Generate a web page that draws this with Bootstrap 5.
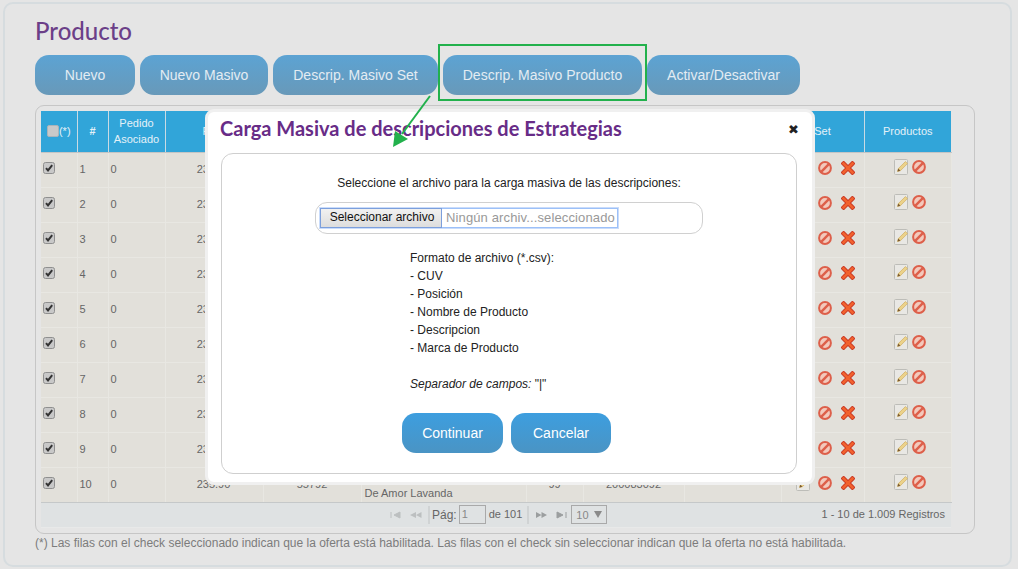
<!DOCTYPE html>
<html lang="es">
<head>
  <meta charset="UTF-8" />
  <meta name="viewport" content="width=device-width, initial-scale=1.0" />
  <title>Producto</title>
  <link href="https://cdn.jsdelivr.net/npm/bootstrap@5.3.3/dist/css/bootstrap.min.css" rel="stylesheet">
  <style>
    body {
      background-color: #e5e5e5;
      font-family: "Liberation Sans", Arial, sans-serif;
      font-size: 12px;
      color: #666;
      height: 569px;
      overflow: hidden;
      position: relative;
    }
    .shell {
      margin: 2px 6px 0 3px;
      height: 565px;
      border: 2px solid #d6dcdf;
      border-radius: 10px;
      padding: 13px 36px 0 30px;
    }
    .page-title {
      font-family: Lato, sans-serif;
      font-size: 24px;
      font-weight: 500;
      line-height: 28px;
      color: #6b3f88;
      margin: 0 0 10px;
    }
    .top-bar { gap: 5px; }
    .btn-top {
      height: 40px;
      padding: 0;
      border: 0;
      border-radius: 14px;
      background: linear-gradient(#5ca3d3, #6899b9);
      color: #e3ecf3;
      font-size: 14px;
    }
    .w-a { width: 100px; }
    .w-b { width: 128px; }
    .w-c { width: 165px; }
    .w-d { width: 199px; }
    .w-e { width: 153px; }
    .frame {
      margin-top: 10px;
      width: 940px;
      height: 429px;
      border: 1px solid #c6c6c6;
      border-radius: 9px;
      padding: 5px;
    }
    .grid-tbl {
      table-layout: fixed;
      width: 910px;
      border-collapse: collapse;
    }
    .grid-tbl th {
      height: 41px;
      padding: 0;
      background: #31a5d9;
      color: #e4f1f8;
      font-size: 11px;
      line-height: 16px;
      font-weight: 400;
      text-align: center;
      border-right: 1px solid #c9dbe4;
      border-bottom: 1px solid #c5c5c5;
    }
    .grid-tbl th:last-child { border-right: 0; }
    .grid-tbl th.price-head { text-align: left; padding-left: 37px; }
    .grid-tbl td {
      height: 35px;
      padding: 0 0 0 2px;
      background: #e2e0da;
      border-right: 1px solid #e8e7e2;
      border-bottom: 1px solid #e8e7e2;
      font-size: 11px;
      line-height: 17px;
      color: #666;
      vertical-align: middle;
    }
    .grid-tbl tr:last-child td { border-bottom: 1px solid #c5c8c9; }
    .grid-tbl td.mid { text-align: center; padding: 0; }
    .grid-tbl td.price { padding-right: 1px; }
    .grid-tbl td.chk { padding: 0 0 5px 2px; }
    .grid-tbl td.desc-cell { padding-left: 3px; }
    .grid-tbl td.set-cell { padding-left: 14px; }
    .grid-tbl td.prod-cell { text-align: center; padding: 0 0 0 5px; }
    .set-icons { gap: 7px; padding-top: 1px; }
    .set-icons .ico + .ico + .ico { margin-left: 2px; }
    .prod-icons { gap: 3px; }
    .c1 { width: 36px; } .c2 { width: 31px; } .c3 { width: 57px; }
    .c4 { width: 98px; } .c5 { width: 98px; } .c6 { width: 165px; }
    .c7 { width: 57px; } .c8 { width: 101px; } .c9 { width: 97px; }
    .c10 { width: 83px; } .c11 { width: 87px; }
    .head-box {
      width: 12px;
      height: 12px;
      background: #c9c9c9;
      border: 1px solid #aab4ba;
      border-radius: 2px;
      display: inline-block;
      vertical-align: -2px;
    }
    .ico { display: inline-block; vertical-align: middle; }
    .pager {
      width: 910px;
      height: 25px;
      background: #dfe2e3;
      border-bottom: 1px solid #e8e9e9;
      color: #666;
      font-size: 11px;
      padding-right: 6px;
    }
    .pg-left { margin-left: 349px; }
    .pg-sep { width: 2px; height: 18px; background: #d0d3d4; }
    .pg-lbl { font-size: 12px; }
    .pg-num {
      width: 27px;
      height: 19px;
      border: 1px solid #a9a9a9;
      padding-left: 2px;
      line-height: 17px;
      color: #888;
      font-size: 11px;
    }
    .pg-size {
      width: 36px;
      height: 19px;
      border: 1px solid #a9a9a9;
      padding-left: 4px;
      line-height: 18px;
      color: #888;
      font-size: 11px;
    }
    .ml2 { margin-left: 2px; }
    .ml3 { margin-left: 3px; }
    .ml4 { margin-left: 4px; }
    .ml5 { margin-left: 5px; }
    .ml6 { margin-left: 6px; }
    .ml8 { margin-left: 8px; }
    .foot-note { margin: 2px 0 0; color: #7c7c7c; font-size: 12px; line-height: 14px; }

    /* lo que va encima de la tabla */
    .mark-box {
      position: absolute;
      left: 438px;
      top: 44px;
      width: 209px;
      height: 57px;
      border: 2px solid #22b14c;
    }
    .load-modal {
      position: absolute;
      left: 205px;
      top: 109px;
      width: 610px;
      height: 376px;
      background: #fff;
      border: 3px solid #f0f0f0;
      border-radius: 9px;
      padding: 4px 15px 11px 12px;
      color: #222;
    }
    .load-title {
      font-family: Lato, sans-serif;
      font-size: 20px;
      font-weight: 700;
      line-height: 24px;
      color: #682c87;
      margin: 0;
    }
    .close-x {
      font-family: "DejaVu Sans", sans-serif;
      font-size: 13px;
      line-height: 16px;
      color: #222;
      margin: 4px -2px 0 0;
    }
    .load-box {
      margin: 13px 0 0 1px;
      height: 321px;
      border: 1px solid #cfcfcf;
      border-radius: 12px;
      padding-top: 22px;
    }
    .load-box p { margin: 0; line-height: 15px; }
    .file-row {
      width: 388px;
      height: 32px;
      margin: 11px auto 0;
      border: 1px solid #d0d0d0;
      border-radius: 12px;
      padding-left: 4px;
    }
    .file-focus { border: 1px solid #9cc0f8; box-shadow: 0 0 0 1px #c9dcfb; height: 20px; }
    .file-btn {
      width: 122px;
      height: 20px;
      margin: -1px 0 0 -1px;
      border: 1px solid #7c9fdc;
      background: linear-gradient(#f1f1f1, #dddddd);
      color: #111;
      font-size: 12px;
      line-height: 17px;
      padding: 0 0 0 2px;
    }
    .file-name {
      width: 175px;
      padding-left: 4px;
      color: #999;
      font-size: 13px;
      letter-spacing: .13px;
      line-height: 18px;
      white-space: nowrap;
    }
    .fmt-list {
      margin: 15px 0 0 188px;
      line-height: 18px;
      color: #222;
    }
    .go-row { margin-top: 20px; padding-right: 5px; }
    .btn-go {
      height: 40px;
      padding: 0;
      border: 0;
      border-radius: 14px;
      background: linear-gradient(#3d9edf, #4a94c4);
      color: #fff;
      font-size: 14px;
    }
    .go-a { width: 101px; }
    .go-b { width: 100px; }
    .arrow-over { position: absolute; left: 385px; top: 90px; }
  </style>
</head>
<body>
  <svg width="0" height="0" class="position-absolute">
    <symbol id="i-ban" viewBox="0 0 14 14">
      <circle cx="7" cy="7" r="5.9" fill="#f3c9bc" stroke="#dd5f4a" stroke-width="2"/>
      <path d="M3.200 10.800 10.800 3.200" stroke="#dd5f4a" stroke-width="2.400"/>
    </symbol>
    <symbol id="i-del" viewBox="0 0 14 14">
      <path d="M2.600 2.600 11.400 11.400M11.400 2.600 2.600 11.400" stroke="#c93a26" stroke-width="4.400" stroke-linecap="square"/>
      <path d="M2.600 2.600 11.400 11.400M11.400 2.600 2.600 11.400" stroke="#f2622e" stroke-width="2.600" stroke-linecap="square"/>
    </symbol>
    <symbol id="i-edit" viewBox="0 0 15 16">
      <rect x=".5" y=".5" width="13" height="15" rx="1" fill="#e9e8e4" stroke="#bdbdb8"/>
      <path d="M3.500 12.500 4.300 9.600 11.400 2.600 13.500 4.600 6.400 11.700Z" fill="#ecd28a" stroke="#cfae62" stroke-width=".7"/>
      <path d="M3.500 12.500 4.300 9.600 6.400 11.700Z" fill="#7a5a30"/>
    </symbol>
    <symbol id="i-check" viewBox="0 0 12 12">
      <rect x=".5" y=".5" width="11" height="11" rx="2" fill="#c8c8c8" stroke="#8f8f8f"/>
      <path d="M3 6.200 5 8.400 9.200 3.200" fill="none" stroke="#333" stroke-width="2"/>
    </symbol>
  </svg>

  <div class="shell">
    <h1 class="page-title">Producto</h1>
    <div class="d-flex top-bar">
      <button type="button" class="btn btn-top w-a">Nuevo</button>
      <button type="button" class="btn btn-top w-b">Nuevo Masivo</button>
      <button type="button" class="btn btn-top w-c">Descrip. Masivo Set</button>
      <button type="button" class="btn btn-top w-d">Descrip. Masivo Producto</button>
      <button type="button" class="btn btn-top w-e">Activar/Desactivar</button>
    </div>

    <div class="frame">
      <table class="grid-tbl">
        <thead>
          <tr>
            <th class="c1"><span class="head-box"></span>(*)</th>
            <th class="c2 fw-bold">#</th>
            <th class="c3">Pedido Asociado</th>
            <th class="c4 price-head">P</th>
            <th class="c5"></th>
            <th class="c6"></th>
            <th class="c7"></th>
            <th class="c8"></th>
            <th class="c9"></th>
            <th class="c10">Set</th>
            <th class="c11">Productos</th>
          </tr>
        </thead>
        <tbody id="rows"></tbody>
      </table>
      <div class="pager d-flex align-items-center">
        <div class="pg-left d-flex align-items-center">
          <svg class="ico" width="11" height="8" viewBox="0 0 11 8"><path d="M1 1v6M10 1v6L4 4Z" stroke="#bcbfc0" fill="#bcbfc0"/></svg>
          <svg class="ico ml8" width="13" height="8" viewBox="0 0 13 8"><path d="M7 1v6L1 4ZM12.500 1v6L7 4Z" fill="#bcbfc0"/></svg>
          <span class="pg-sep ml6"></span>
          <span class="pg-lbl ml2">Pág:</span>
          <span class="pg-num ml2">1</span>
          <span class="ml3">de 101</span>
          <span class="pg-sep ml5"></span>
          <svg class="ico ml6" width="13" height="8" viewBox="0 0 13 8"><path d="M1 1v6L6.500 4ZM6.500 1v6L12 4Z" fill="#9b9e9f"/></svg>
          <svg class="ico ml8" width="11" height="8" viewBox="0 0 11 8"><path d="M1 1v6L7 4ZM10 1v6" stroke="#9b9e9f" fill="#9b9e9f"/></svg>
          <span class="pg-size ml4 d-flex justify-content-between align-items-center pe-1">10
            <svg width="8" height="7" viewBox="0 0 8 7"><path d="M0 0h8L4 7Z" fill="#8a8a8a"/></svg>
          </span>
        </div>
        <span class="ms-auto">1 - 10 de 1.009 Registros</span>
      </div>
    </div>
    <p class="foot-note">(*) Las filas con el check seleccionado indican que la oferta está habilitada. Las filas con el check sin seleccionar indican que la oferta no está habilitada.</p>
  </div>

  <div class="mark-box"></div>

  <div class="load-modal">
    <div class="d-flex justify-content-between align-items-center">
      <h2 class="load-title">Carga Masiva de descripciones de Estrategias</h2>
      <span class="close-x">&#10006;</span>
    </div>
    <div class="load-box">
      <p class="text-center">Seleccione el archivo para la carga masiva de las descripciones:</p>
      <div class="file-row d-flex align-items-center">
        <div class="file-focus d-flex align-items-center">
          <button type="button" class="file-btn">Seleccionar archivo</button>
          <span class="file-name">Ningún archiv...seleccionado</span>
        </div>
      </div>
      <div class="fmt-list">
        Formato de archivo (*.csv):<br>
        - CUV<br>
        - Posición<br>
        - Nombre de Producto<br>
        - Descripcion<br>
        - Marca de Producto<br>
        <br>
        <em>Separador de campos:</em> "|"
      </div>
      <div class="go-row d-flex justify-content-center gap-2">
        <button type="button" class="btn btn-go go-a">Continuar</button>
        <button type="button" class="btn btn-go go-b">Cancelar</button>
      </div>
    </div>
  </div>

  <svg class="arrow-over" width="50" height="60" viewBox="0 0 50 60">
    <path d="M45 6 17 44" stroke="#22b14c" stroke-width="2" fill="none"/>
    <path d="M8 57 10 41 23 49Z" fill="#22b14c"/>
  </svg>

  <script>
    // filas de la grilla, casi todo queda tapado por el modal
    const ban = '<svg class="ico" width="14" height="14"><use href="#i-ban"/></svg>';
    const del = '<svg class="ico" width="14" height="14"><use href="#i-del"/></svg>';
    const edit = '<svg class="ico" width="15" height="16"><use href="#i-edit"/></svg>';
    const check = '<svg class="ico" width="12" height="12"><use href="#i-check"/></svg>';
    let html = '';
    for (let i = 1; i <= 10; i++) {
      const last = i === 10;
      html += `<tr>
        <td class="chk">${check}</td>
        <td>${i}</td>
        <td>0</td>
        <td class="mid price">235.90</td>
        <td class="mid">${last ? '55792' : ''}</td>
        <td class="desc-cell">${last ? '<br>De Amor Lavanda' : ''}</td>
        <td class="mid">${last ? '99' : ''}</td>
        <td class="mid">${last ? '200083092' : ''}</td>
        <td></td>
        <td class="set-cell"><span class="d-inline-flex align-items-center set-icons">${edit}${ban}${del}</span></td>
        <td class="prod-cell"><span class="d-inline-flex align-items-center prod-icons">${edit}${ban}</span></td>
      </tr>`;
    }
    document.getElementById('rows').innerHTML = html;
  </script>
</body>
</html>
